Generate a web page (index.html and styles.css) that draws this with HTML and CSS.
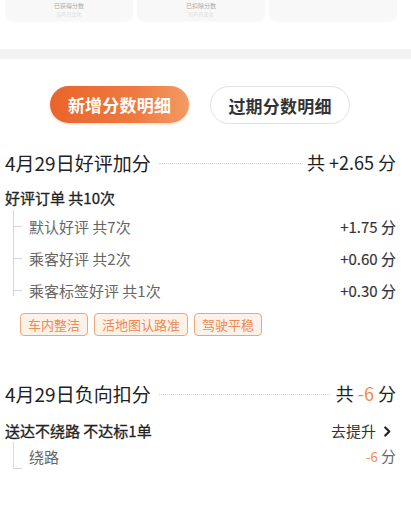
FILE: index.html
```html
<!DOCTYPE html>
<html lang="zh-CN">
<head>
<meta charset="utf-8">
<link rel="stylesheet" href="styles.css">
</head>
<body>
<div class="page">
  <div class="cards">
    <div class="card"><div class="card-main">已获得分数</div><div class="card-sub">较昨日变化</div></div>
    <div class="card"><div class="card-main">已扣除分数</div><div class="card-sub">较昨日变化</div></div>
    <div class="card"></div>
  </div>
  <div class="band"></div>
  <div class="tabs">
    <div class="tab active">新增分数明细</div>
    <div class="tab">过期分数明细</div>
  </div>

  <section class="sec">
    <div class="head">
      <span class="head-title">4月29日好评加分</span>
      <span class="dots"></span>
      <span class="head-total">共 +2.65 分</span>
    </div>
    <div class="group-title">好评订单 共10次</div>
    <div class="tree">
      <div class="row"><span class="tick"></span><span class="row-name">默认好评 共7次</span><span class="row-val">+1.75 分</span></div>
      <div class="row"><span class="tick"></span><span class="row-name">乘客好评 共2次</span><span class="row-val">+0.60 分</span></div>
      <div class="row"><span class="tick"></span><span class="row-name">乘客标签好评 共1次</span><span class="row-val">+0.30 分</span></div>
    </div>
    <div class="tags">
      <span class="tag">车内整洁</span>
      <span class="tag">活地图认路准</span>
      <span class="tag">驾驶平稳</span>
    </div>
  </section>

  <section class="sec sec2">
    <div class="head">
      <span class="head-title">4月29日负向扣分</span>
      <span class="dots"></span>
      <span class="head-total">共 <em class="neg">-6</em> 分</span>
    </div>
    <div class="group-row">
      <span class="group-title2">送达不绕路 不达标1单</span>
      <span class="improve">去提升 <svg class="chev" viewBox="0 0 10 12" width="9" height="11"><path d="M2.5 1.5 L7 6 L2.5 10.5" fill="none" stroke="#222" stroke-width="2.4" stroke-linecap="round" stroke-linejoin="round"/></svg></span>
    </div>
    <div class="tree tree2">
      <div class="row"><span class="tick"></span><span class="row-name">绕路</span><span class="row-val light"><em class="neg small">-6</em> 分</span></div>
    </div>
  </section>
</div>
</body>
</html>
```
FILE: styles.css
```css
* { box-sizing: border-box; margin: 0; padding: 0; }
html, body { background: #fff; }
body {
  font-family: "Noto Sans CJK SC", "Noto Sans", sans-serif;
  color: #222;
  overflow: hidden;
}
.page { width: 411px; height: 511px; overflow: hidden; }

.cards {
  display: flex;
  gap: 4px;
  padding: 0 14px 0 5px;
}
.card {
  flex: 1;
  height: 21px;
  background: #f8f8f8;
  border-radius: 0 0 8px 8px;
  box-shadow: 0 1px 2px rgba(0,0,0,0.03);
  text-align: center;
  overflow: hidden;
  padding-top: 1px;
}
.card-main { font-size: 6px; line-height: 9px; color: #aaa; }
.card-sub { font-size: 5px; line-height: 8px; color: #ddd; }

.band {
  height: 10px;
  background: #f3f3f3;
  margin-top: 28px;
}

.tabs {
  display: flex;
  gap: 21px;
  padding-left: 50px;
  margin-top: 27px;
}
.tab {
  width: 140px;
  height: 38px;
  border-radius: 19px;
  border: 1px solid #e2e2e2;
  background: #fff;
  font-size: 17px;
  font-weight: 700;
  color: #333;
  display: flex;
  align-items: center;
  justify-content: center;
  letter-spacing: 0.2px;
}
.tab.active {
  width: 139px;
  height: 37px;
  border: none;
  color: #fff;
  background: linear-gradient(90deg, #e9642a 0%, #ee7a40 60%, #f39a63 100%);
  box-shadow: 0 1px 3px rgba(233,100,42,0.25);
}

.sec { padding: 0 15px 0 5px; }
.head {
  display: flex;
  align-items: center;
  height: 28px;
  margin-top: 24px;
}
.head-title { font-size: 19px; color: #222; white-space: nowrap; }
.dots {
  flex: 1;
  border-top: 1px dotted #cfcfcf;
  margin: 2px 6px 0 8px;
}
.head-total { font-size: 18px; color: #222; white-space: nowrap; }
.neg { font-style: normal; color: #f08a4b; }
.neg.small { font-size: 13px; }

.group-title {
  font-size: 15px;
  font-weight: 400;
  -webkit-text-stroke: 0.3px #222;
  color: #222;
  margin-top: 11px;
  line-height: 22px;
}

.tree {
  position: relative;
  margin-left: 8px;
  border-left: 1px solid #d6d6d6;
  margin-top: 4px;
  height: 86px;
}
.row {
  display: flex;
  align-items: center;
  height: 32px;
}
.tree .row:first-child { margin-top: -3px; }
.tick {
  width: 8px;
  border-top: 1px solid #d6d6d6;
  margin-right: 7px;
}
.row-name { font-size: 15px; color: #666; flex: 1; }
.row-val { font-size: 15px; color: #333; -webkit-text-stroke: 0.15px #333; }
.row-val.light { color: #666; -webkit-text-stroke: 0; }

.tags {
  display: flex;
  gap: 6px;
  margin-left: 15px;
  margin-top: 17px;
}
.tag {
  height: 23px;
  padding: 0 7px;
  border: 1px solid #efa57a;
  background: #fdf2ea;
  border-radius: 4px;
  color: #ee8a52;
  font-size: 13px;
  display: flex;
  align-items: center;
}

.sec2 .head { margin-top: 43px; }
.group-row {
  display: flex;
  align-items: center;
  justify-content: space-between;
  margin-top: 13px;
  line-height: 22px;
  padding-right: 4px;
}
.group-title2 { font-size: 15px; font-weight: 400; -webkit-text-stroke: 0.3px #222; color: #222; }
.improve { font-size: 15px; color: #333; display: flex; align-items: center; gap: 7px; }
.chev { display: block; }

.tree2 {
  height: 27px;
  border-left: 1px solid #dcdcdc;
  margin-top: 0;
}
.tree2 .row { height: 27px; align-items: flex-end; }
.tree2 .row:first-child { margin-top: 0; }
.tree2 .tick { align-self: flex-end; margin-bottom: 0; }
.tree2 .row-name { color: #666; margin-bottom: 2px; line-height: 20px; }
.tree2 .row-val { margin-bottom: 2px; line-height: 20px; }
```
